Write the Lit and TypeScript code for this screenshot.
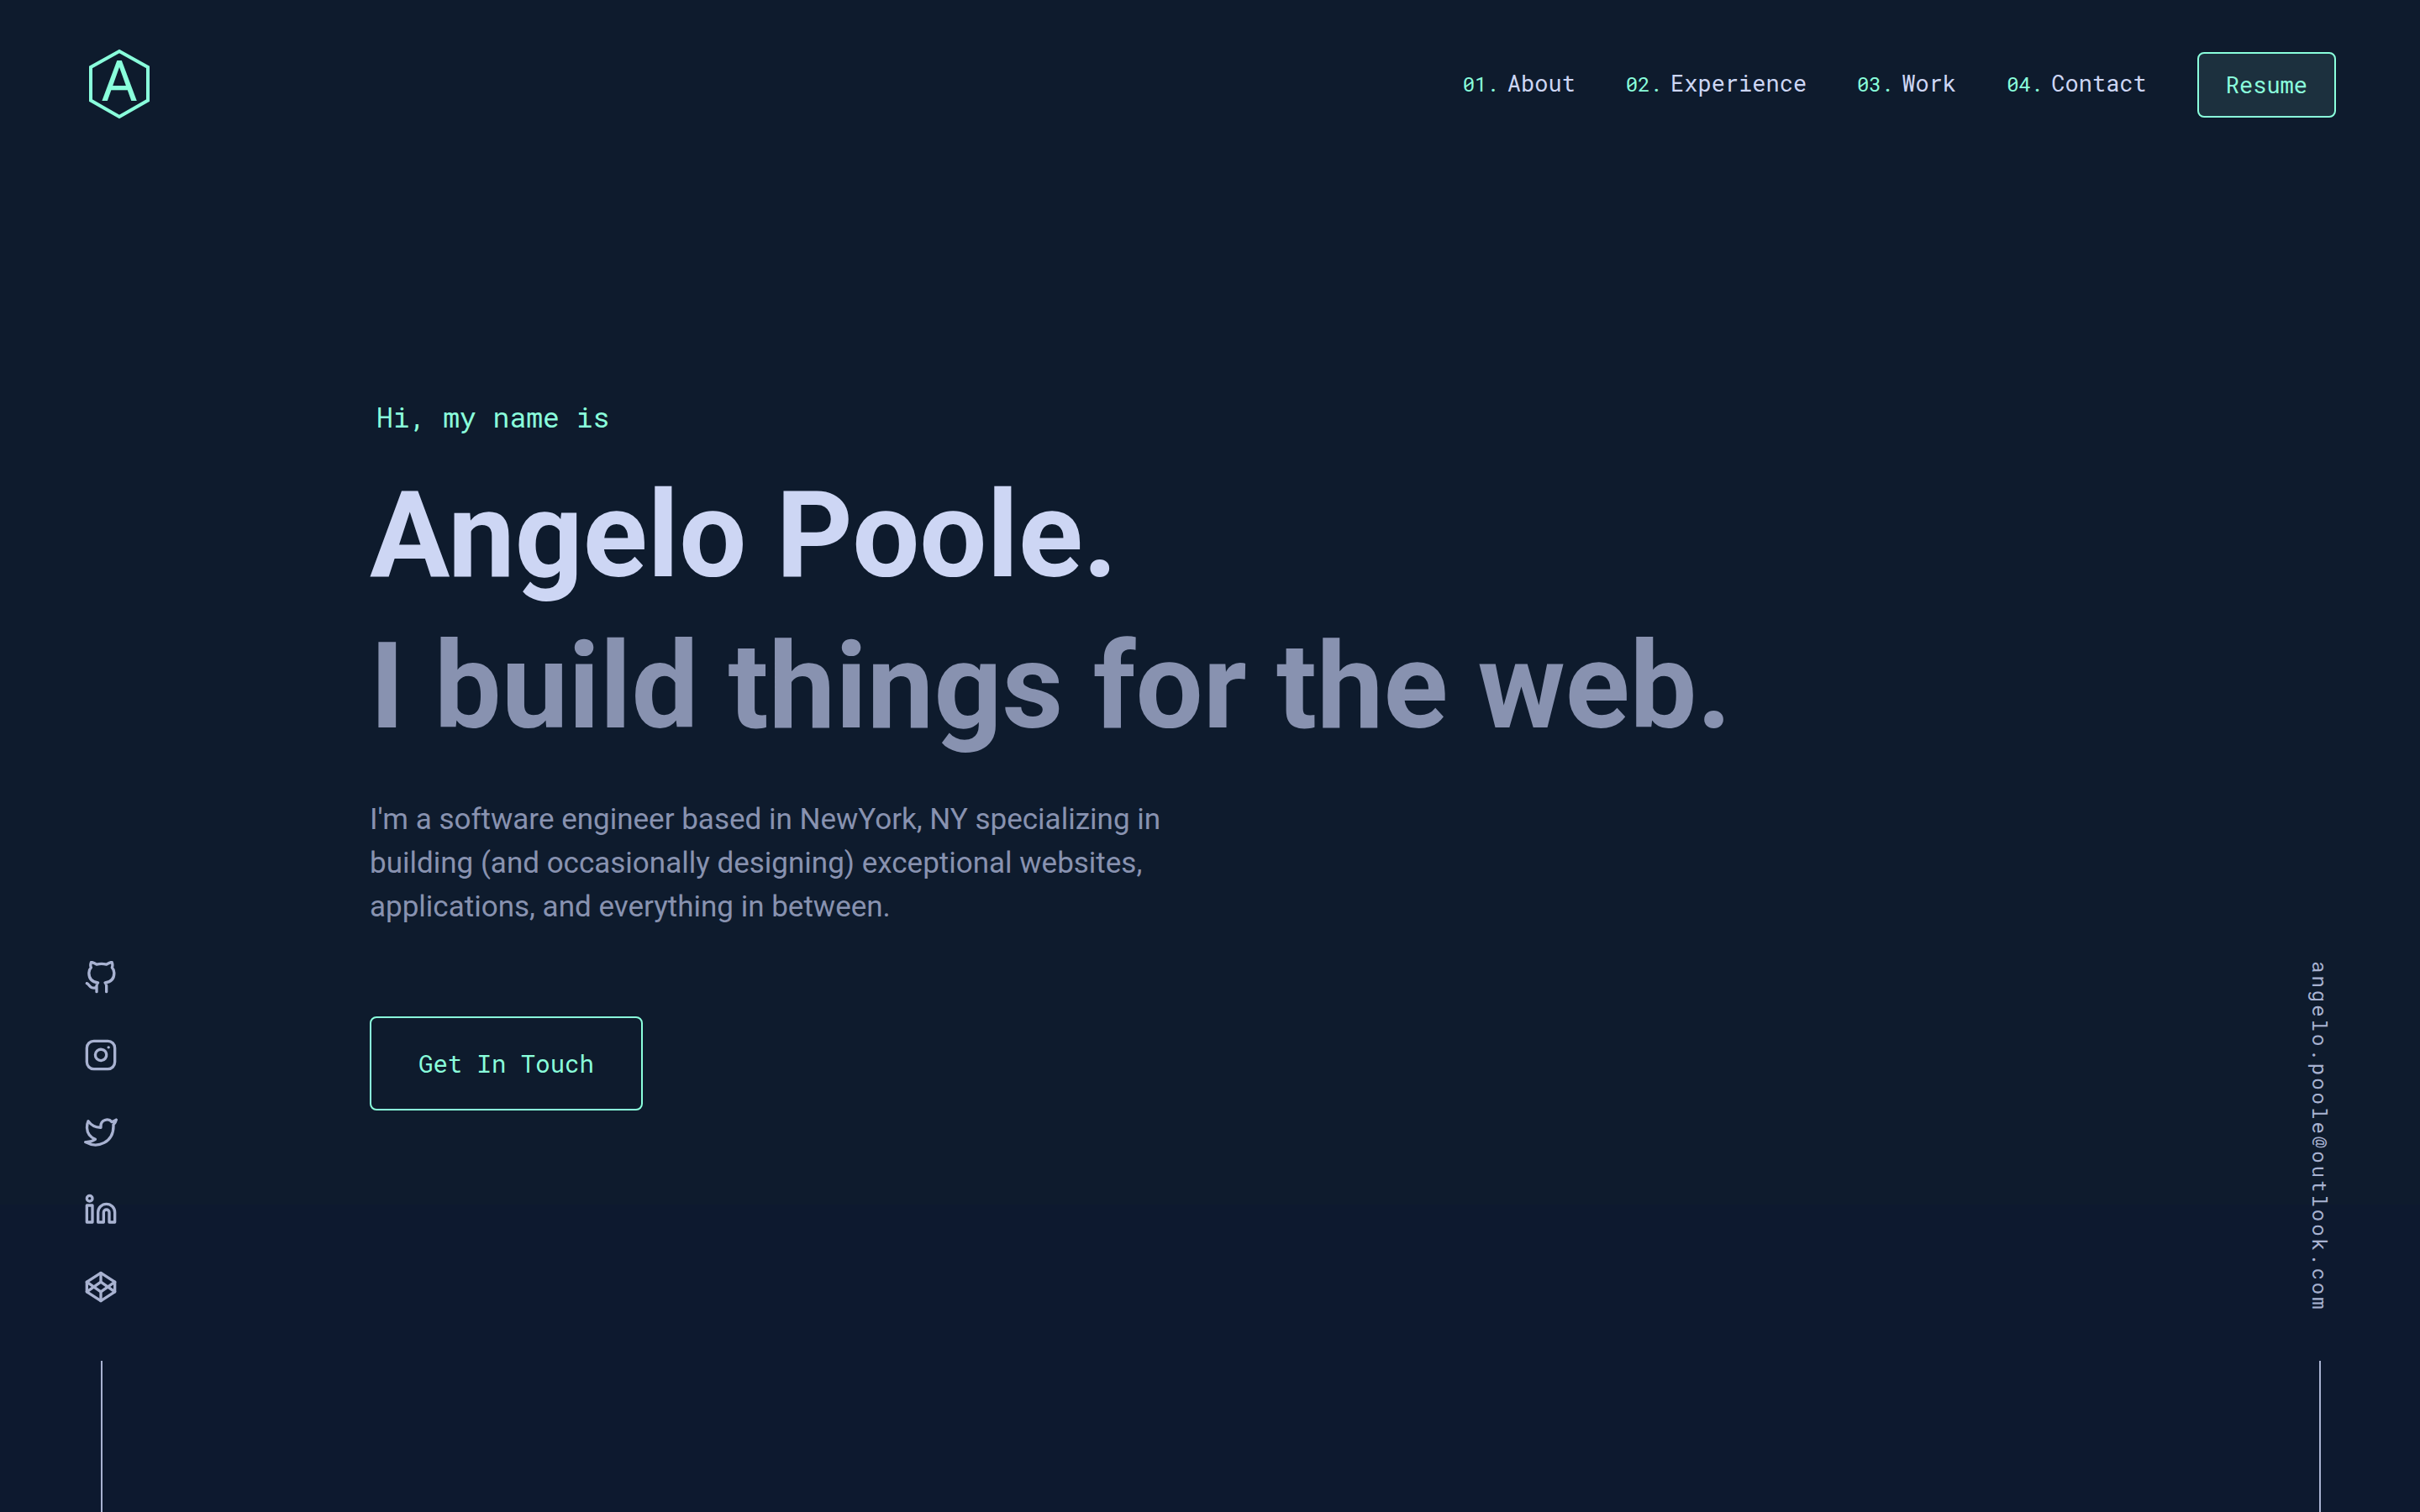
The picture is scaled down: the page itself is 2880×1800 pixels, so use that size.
import { LitElement, html, css, svg } from "lit";
import { customElement } from "lit/decorators.js";

const icon = (paths: unknown) => html`
  <svg class="icon" viewBox="0 0 24 24" fill="none" stroke="currentColor" stroke-width="2"
    stroke-linecap="round" stroke-linejoin="round" aria-hidden="true">${paths}</svg>`;

const socials = [
  {
    label: "GitHub",
    href: "https://github.com",
    art: svg`<path d="M9 19c-5 1.500-5-2.500-7-3m14 6v-3.870a3.370 3.370 0 0 0-.940-2.610c3.140-.350 6.440-1.540 6.440-7A5.440 5.440 0 0 0 20 4.770 5.070 5.070 0 0 0 19.910 1S18.730.650 16 2.480a13.380 13.380 0 0 0-7 0C6.270.650 5.090 1 5.090 1A5.070 5.070 0 0 0 5 4.770a5.440 5.440 0 0 0-1.500 3.780c0 5.420 3.300 6.610 6.440 7A3.370 3.370 0 0 0 9 18.130V22"></path>`,
  },
  {
    label: "Instagram",
    href: "https://www.instagram.com",
    art: svg`<rect x="2" y="2" width="20" height="20" rx="5" ry="5"></rect><path d="M16 11.370A4 4 0 1 1 12.630 8 4 4 0 0 1 16 11.370z"></path><line x1="17.500" y1="6.500" x2="17.510" y2="6.500"></line>`,
  },
  {
    label: "Twitter",
    href: "https://twitter.com",
    art: svg`<path d="M23 3a10.900 10.900 0 0 1-3.140 1.530 4.480 4.480 0 0 0-7.860 3v1A10.660 10.660 0 0 1 3 4s-4 9 5 13a11.640 11.640 0 0 1-7 2c9 5 20 0 20-11.500a4.500 4.500 0 0 0-.080-.830A7.720 7.720 0 0 0 23 3z"></path>`,
  },
  {
    label: "LinkedIn",
    href: "https://www.linkedin.com",
    art: svg`<path d="M16 8a6 6 0 0 1 6 6v7h-4v-7a2 2 0 0 0-2-2 2 2 0 0 0-2 2v7h-4v-7a6 6 0 0 1 6-6z"></path><rect x="2" y="9" width="4" height="12"></rect><circle cx="4" cy="4" r="2"></circle>`,
  },
  {
    label: "CodePen",
    href: "https://codepen.io",
    art: svg`<polygon points="12 2 22 8.500 22 15.500 12 22 2 15.500 2 8.500 12 2"></polygon><line x1="12" y1="22" x2="12" y2="15.500"></line><polyline points="22 8.500 12 15.500 2 8.500"></polyline><polyline points="2 15.500 12 8.500 22 15.500"></polyline><line x1="12" y1="2" x2="12" y2="8.500"></line>`,
  },
];

const links = [
  { num: "01.", text: "About" },
  { num: "02.", text: "Experience" },
  { num: "03.", text: "Work" },
  { num: "04.", text: "Contact" },
];

@customElement("app-root")
export class AppRoot extends LitElement {
  static styles = css`
    :host {
      --green: #8affdc;
      --light: #cdd6f4;
      --mid: #a8b2d1;
      --slate: #8892b0;
      --mono: "Roboto Mono", "DejaVu Sans Mono", "Liberation Mono", monospace;
      display: block;
      font-family: Roboto, "Liberation Sans", sans-serif;
      color: var(--slate);
    }
    a {
      color: inherit;
      text-decoration: none;
    }
    .page {
      display: grid;
      grid-template-columns: 1fr minmax(0, 2000px) 1fr;
      grid-template-rows: auto 1fr;
      min-height: 100vh;
      background: linear-gradient(#0e1b2d calc(100% - 366px), #0d192f calc(100% - 366px));
    }
    .top {
      grid-area: 1 / 1 / 2 / 4;
      display: flex;
      align-items: center;
      justify-content: space-between;
      height: 202px;
      padding: 0 100px;
    }
    .logo {
      display: block;
      width: 84px;
      height: 84px;
      color: var(--green);
    }
    .logo svg {
      display: block;
      overflow: visible;
    }
    .mark {
      font-family: Roboto, sans-serif;
      font-size: 66px;
      font-weight: 400;
    }
    .nav {
      display: flex;
      align-items: center;
      gap: 60px;
      font-family: var(--mono);
      font-size: 27px;
    }
    .list {
      display: flex;
      gap: 60px;
      margin: 0;
      padding: 0 0 6px;
      list-style: none;
    }
    .link {
      display: flex;
      align-items: baseline;
      gap: 10px;
      color: var(--light);
    }
    .num {
      font-size: 24px;
      color: var(--green);
    }
    .btn {
      box-sizing: border-box;
      border: 2px solid var(--green);
      border-radius: 8px;
      background: none;
      color: var(--green);
      font-family: var(--mono);
      cursor: pointer;
    }
    .resume {
      height: 78px;
      padding: 0 32px 2px;
      background: #1c303e;
      font-size: 27px;
    }
    .cta {
      height: 112px;
      padding: 0 56px;
      font-size: 29px;
    }
    .hero {
      grid-area: 1 / 2 / 3 / 3;
      align-self: center;
    }
    .hi {
      margin: 0 0 34px;
      padding-left: 8px;
      font-family: var(--mono);
      font-size: 33px;
      line-height: 36px;
      color: var(--green);
    }
    .big {
      margin: 0;
      font-size: 142px;
      font-weight: 700;
      line-height: 180px;
    }
    .name {
      color: var(--light);
    }
    .about {
      max-width: 1000px;
      margin: 42px 0 104px;
      font-size: 35px;
      line-height: 52px;
    }
    .rail {
      display: flex;
      flex-direction: column;
      align-self: end;
      color: var(--mid);
    }
    .left {
      grid-area: 2 / 1 / 3 / 2;
      justify-self: start;
      padding-left: 100px;
    }
    .right {
      grid-area: 2 / 3 / 3 / 4;
      justify-self: end;
      align-items: center;
      padding-right: 102px;
    }
    .socials {
      display: flex;
      flex-direction: column;
      gap: 52px;
      margin: 0 0 68px;
      padding: 0;
      list-style: none;
    }
    .icon {
      display: block;
      width: 40px;
      height: 40px;
    }
    .rule {
      width: 2px;
      height: 180px;
      background: var(--mid);
    }
    .left .rule {
      margin-left: 20px;
    }
    .email {
      margin-bottom: 58px;
      writing-mode: vertical-rl;
      font-family: var(--mono);
      font-size: 24px;
      line-height: 34px;
      letter-spacing: 3px;
    }
  `;

  render() {
    return html`
      <div class="page">
        <header class="top">
          <a class="logo" href="#" aria-label="Home">
            <svg width="84" height="84" viewBox="0 0 84 84" aria-hidden="true">
              <polygon points="42,2 76,21 76,60.500 42,80 8,60.500 8,21" fill="none" stroke="currentColor" stroke-width="4"></polygon>
              <text class="mark" x="42" y="61" text-anchor="middle" fill="currentColor">A</text>
            </svg>
          </a>
          <nav class="nav">
            <ol class="list">
              ${links.map((l) => html`<li><a class="link" href="#${l.text.toLowerCase()}"><span class="num">${l.num}</span><span>${l.text}</span></a></li>`)}
            </ol>
            <button class="btn resume" type="button">Resume</button>
          </nav>
        </header>
        <main class="hero">
          <p class="hi">Hi, my name is</p>
          <h1 class="big name">Angelo Poole.</h1>
          <h2 class="big">I build things for the web.</h2>
          <p class="about">
            I'm a software engineer based in NewYork, NY specializing in building (and occasionally
            designing) exceptional websites, applications, and everything in between.
          </p>
          <button class="btn cta" type="button">Get In Touch</button>
        </main>
        <aside class="rail left">
          <ul class="socials">
            ${socials.map((s) => html`<li><a href=${s.href} aria-label=${s.label}>${icon(s.art)}</a></li>`)}
          </ul>
          <div class="rule"></div>
        </aside>
        <aside class="rail right">
          <a class="email" href="mailto:angelo.poole@outlook.com">angelo.poole@outlook.com</a>
          <div class="rule"></div>
        </aside>
      </div>
    `;
  }
}
